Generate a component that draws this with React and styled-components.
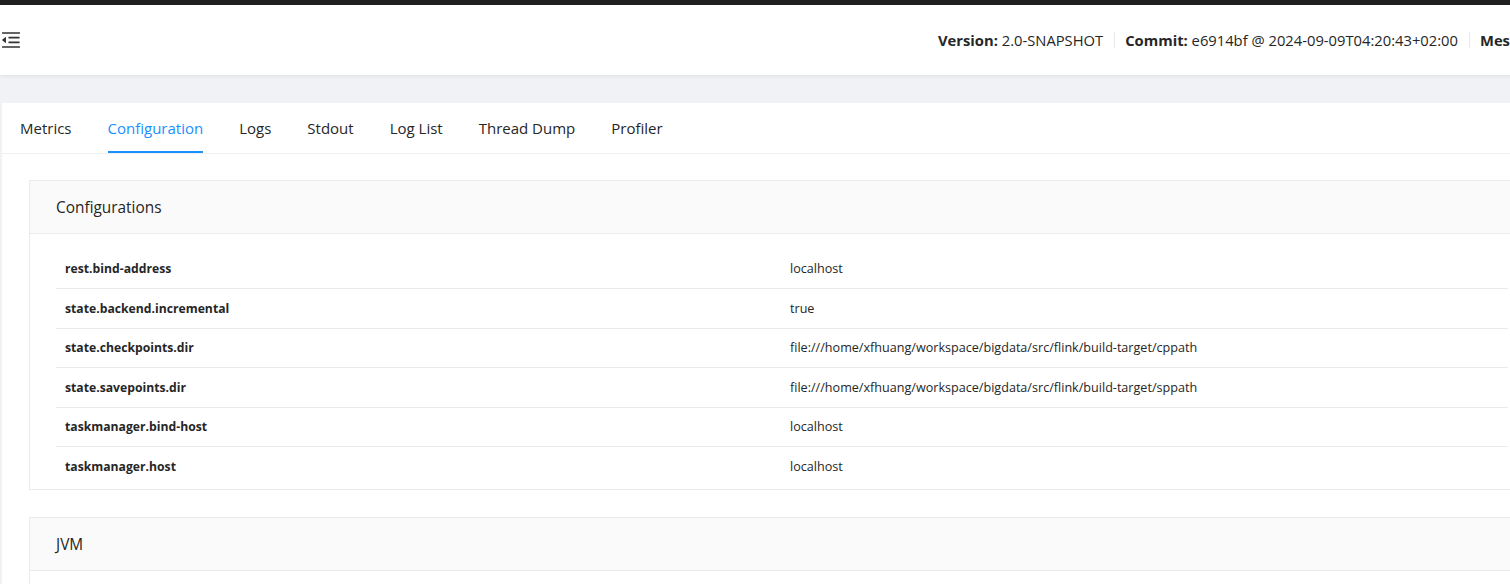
import styled, { createGlobalStyle } from 'styled-components';
import { useState } from 'react';

const GlobalStyle = createGlobalStyle`
    html, body {
        margin: 0;
        padding: 0;
        overflow: hidden;
        background: #f0f2f5;
    }
    body {
        font-family: "Open Sans", "Noto Sans", sans-serif;
        color: rgba(0, 0, 0, 0.85);
    }
`;

const tabs = ['Metrics', 'Configuration', 'Logs', 'Stdout', 'Log List', 'Thread Dump', 'Profiler'];

const configurations = [
    { key: 'rest.bind-address', value: 'localhost' },
    { key: 'state.backend.incremental', value: 'true' },
    { key: 'state.checkpoints.dir', value: 'file:///home/xfhuang/workspace/bigdata/src/flink/build-target/cppath' },
    { key: 'state.savepoints.dir', value: 'file:///home/xfhuang/workspace/bigdata/src/flink/build-target/sppath' },
    { key: 'taskmanager.bind-host', value: 'localhost' },
    { key: 'taskmanager.host', value: 'localhost' },
];

const MenuFoldIcon = () => (
    <svg width="20" height="20" viewBox="64 64 896 896" fill="currentColor">
        <path d="M408 442h480c4.4 0 8-3.6 8-8v-56c0-4.4-3.6-8-8-8H408c-4.4 0-8 3.6-8 8v56c0 4.4 3.6 8 8 8zm-8 204c0 4.4 3.6 8 8 8h480c4.4 0 8-3.6 8-8v-56c0-4.4-3.6-8-8-8H408c-4.4 0-8 3.6-8 8v56zm504-486H120c-4.4 0-8 3.6-8 8v56c0 4.4 3.6 8 8 8h784c4.4 0 8-3.6 8-8v-56c0-4.4-3.6-8-8-8zm0 632H120c-4.4 0-8 3.6-8 8v56c0 4.4 3.6 8 8 8h784c4.4 0 8-3.6 8-8v-56c0-4.4-3.6-8-8-8zM115.4 518.9L271.7 642c5.8 4.6 14.4.5 14.4-6.9V388.9c0-7.4-8.5-11.5-14.4-6.9L115.4 505.1a8.74 8.74 0 000 13.8z" />
    </svg>
);

const App = () => {

    const [activeTab, setActiveTab] = useState('Configuration');

    return (
        <Shell>
            <GlobalStyle />
            <TopStrip />
            <Header>
                <Trigger><MenuFoldIcon /></Trigger>
                <Info>
                    <InfoItem><strong>Version:</strong> 2.0-SNAPSHOT</InfoItem>
                    <Separator />
                    <InfoItem><strong>Commit:</strong> e6914bf @ 2024-09-09T04:20:43+02:00</InfoItem>
                    <Separator />
                    <InfoItem><strong>Message:</strong> &lt;n/a&gt;</InfoItem>
                </Info>
            </Header>

            <Main>
                <Panel>
                    <TabNav>
                        {tabs.map(tab => (
                            <Tab key={tab} $active={tab === activeTab} onClick={() => setActiveTab(tab)}>{tab}</Tab>
                        ))}
                    </TabNav>

                    <PanelBody>
                        <Card>
                            <CardHead>Configurations</CardHead>
                            <CardBody>
                                <ConfigTable>
                                    <tbody>
                                        {configurations.map(item => (
                                            <Row key={item.key}>
                                                <KeyCell>{item.key}</KeyCell>
                                                <ValueCell>{item.value}</ValueCell>
                                            </Row>
                                        ))}
                                    </tbody>
                                </ConfigTable>
                            </CardBody>
                        </Card>

                        <Card>
                            <CardHead>JVM</CardHead>
                            <CardBody />
                        </Card>
                    </PanelBody>
                </Panel>
            </Main>
        </Shell>
    )
};


const Shell = styled.div`
    width: 1562px;
    min-height: 584px;
`;

const TopStrip = styled.div`
    height: 5px;
    background: #1f1f1f;
`;

const Header = styled.header`
    position: relative;
    z-index: 1;
    height: 70px;
    display: grid;
    grid-template-columns: 938px auto;
    align-items: center;
    background: #fff;
    box-shadow: 0 1px 4px rgba(0, 21, 41, 0.08);
    overflow: hidden;
`;

const Trigger = styled.div`
    display: flex;
    align-items: center;
    padding-left: 1px;
    color: #333;
`;

const Info = styled.div`
    display: flex;
    align-items: center;
    white-space: nowrap;
    font-size: 14.75px;
    color: #262626;

    strong {
        font-weight: 700;
    }
`;

const InfoItem = styled.span`
    line-height: 22px;
`;

const Separator = styled.span`
    display: inline-block;
    width: 1px;
    height: 16px;
    margin: 0 10px 0 11px;
    background: #e8e8e8;
`;

const Main = styled.main`
    padding: 28px 0 0 2px;
`;

const Panel = styled.section`
    background: #fff;
    min-height: 480px;
`;

const TabNav = styled.nav`
    display: flex;
    gap: 36px;
    padding: 0 18px;
    border-bottom: 1px solid #f0f0f0;
`;

const Tab = styled.div`
    padding: 14px 0;
    line-height: 22px;
    font-size: 15px;
    cursor: pointer;
    color: ${props => props.$active ? '#1890ff' : '#262626'};
    box-shadow: ${props => props.$active ? 'inset 0 -2px 0 #1890ff' : 'none'};
`;

const PanelBody = styled.div`
    padding: 26px 27px;
    display: flex;
    flex-direction: column;
    gap: 27px;
`;

const Card = styled.div`
    border: 1px solid #ebebeb;
    background: #fff;
`;

const CardHead = styled.div`
    height: 52px;
    display: flex;
    align-items: center;
    padding: 0 26px;
    background: #fafafa;
    border-bottom: 1px solid #ebebeb;
    font-size: 15.4px;
    color: #262626;
`;

const CardBody = styled.div`
    padding: 15px 26px 3px;
    min-height: 20px;
`;

const ConfigTable = styled.table`
    width: 100%;
    border-collapse: collapse;
`;

const Row = styled.tr`
    height: 39.5px;
    border-bottom: 1px solid #ebebeb;

    &:last-child {
        border-bottom: none;
    }
`;

const KeyCell = styled.td`
    width: 50%;
    padding: 0 9px;
    font-size: 12.2px;
    font-weight: 700;
    color: #262626;
`;

const ValueCell = styled.td`
    padding: 0 8px;
    font-size: 12.6px;
    color: #262626;
`;

export default App;
